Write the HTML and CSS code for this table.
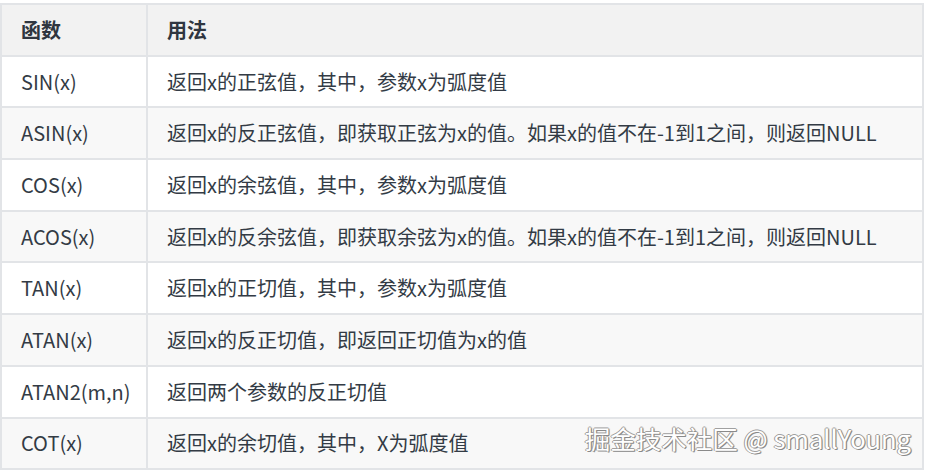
FILE: index.html
```html
<!DOCTYPE html>
<html lang="zh-CN">
<head>
<meta charset="utf-8">
<title>数学函数</title>
<link rel="stylesheet" href="styles.css">
</head>
<body>
<div class="wrap">
  <table class="fn-table">
    <thead>
      <tr><th class="c1">函数</th><th>用法</th></tr>
    </thead>
    <tbody>
      <tr><td class="c1">SIN(x)</td><td>返回x的正弦值，其中，参数x为弧度值</td></tr>
      <tr><td class="c1">ASIN(x)</td><td>返回x的反正弦值，即获取正弦为x的值。如果x的值不在-1到1之间，则返回NULL</td></tr>
      <tr><td class="c1">COS(x)</td><td>返回x的余弦值，其中，参数x为弧度值</td></tr>
      <tr><td class="c1">ACOS(x)</td><td>返回x的反余弦值，即获取余弦为x的值。如果x的值不在-1到1之间，则返回NULL</td></tr>
      <tr><td class="c1">TAN(x)</td><td>返回x的正切值，其中，参数x为弧度值</td></tr>
      <tr><td class="c1">ATAN(x)</td><td>返回x的反正切值，即返回正切值为x的值</td></tr>
      <tr><td class="c1">ATAN2(m,n)</td><td>返回两个参数的反正切值</td></tr>
      <tr><td class="c1">COT(x)</td><td>返回x的余切值，其中，X为弧度值</td></tr>
    </tbody>
  </table>
  <div class="watermark">掘金技术社区 @ smallYoung</div>
</div>
</body>
</html>
```
FILE: styles.css
```css
html, body {
  margin: 0;
  padding: 0;
  background: #ffffff;
}
body {
  font-family: "Noto Sans CJK SC", "Noto Sans", sans-serif;
  color: #333b45;
}
.wrap {
  position: relative;
  width: 925px;
  height: 470px;
  padding-top: 3px;
  box-sizing: border-box;
}
.fn-table {
  border-collapse: collapse;
  table-layout: fixed;
  width: 924px;
  font-size: 20px;
}
.fn-table th,
.fn-table td {
  border: 2px solid #e2e4e7;
  height: 49.7px;
  padding: 0 19px;
  text-align: left;
  vertical-align: middle;
  line-height: 24px;
  white-space: nowrap;
}
.fn-table th {
  background: #f2f2f2;
  font-weight: 700;
  color: #2f3640;
}
.fn-table .c1 {
  width: 146px;
  box-sizing: border-box;
  padding-right: 8px;
}
.fn-table tbody tr:nth-child(even) td {
  background: #f8f8f8;
}
.watermark {
  position: absolute;
  right: 14px;
  bottom: 14px;
  font-size: 25.5px;
  color: #ffffff;
  text-shadow: 1px 1px 0 #8a8a8a, -1px 0 0 #9a9a9a, 0 -1px 0 #a0a0a0, 1px 0 1px #808080;
}
```
